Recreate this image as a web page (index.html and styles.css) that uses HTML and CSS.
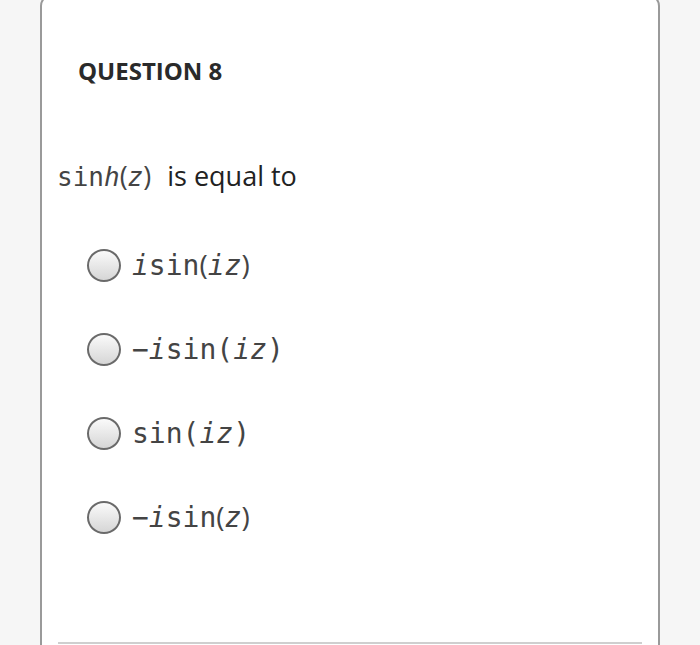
FILE: index.html
```html
<!DOCTYPE html>
<html>
<head>
<meta charset="utf-8">
<link rel="stylesheet" href="styles.css">
</head>
<body>
<div class="card">
  <h2 class="title">QUESTION 8</h2>
  <p class="question"><span class="m">sin<i>h</i></span><span class="p">(</span><span class="m"><i>z</i></span><span class="p">)</span><span class="rest">is equal to</span></p>
  <ul class="options">
    <li class="opt"><span class="radio"></span><span class="label"><span class="m"><i>i</i>sin</span><span class="p">(</span><span class="m"><i>iz</i></span><span class="p">)</span></span></li>
    <li class="opt"><span class="radio"></span><span class="label"><span class="m">−<i>i</i>sin(<i>iz</i>)</span></span></li>
    <li class="opt"><span class="radio"></span><span class="label"><span class="m">sin(<i>iz</i>)</span></span></li>
    <li class="opt"><span class="radio"></span><span class="label"><span class="m">−<i>i</i>sin</span><span class="p">(</span><span class="m"><i>z</i></span><span class="p">)</span></span></li>
  </ul>
  <div class="rule"></div>
</div>
</body>
</html>
```
FILE: styles.css
```css
html, body {
  margin: 0;
  padding: 0;
  background: #f6f6f6;
  overflow: hidden;
}
body {
  font-family: "Open Sans", sans-serif;
  color: #222;
}
.card {
  margin: -6px 0 0 40px;
  width: 620px;
  height: 700px;
  background: #fff;
  border: 2px solid #9a9a9a;
  border-radius: 12px;
  padding: 59px 0 0 0;
  box-sizing: border-box;
}
.title {
  margin: 0 0 0 36px;
  font-size: 24px;
  line-height: 32px;
  font-weight: 700;
  color: #2a2a2a;
}
.question {
  margin: 71px 0 0 15px;
  font-size: 27px;
  line-height: 36px;
  color: #222;
}
.question .p {
  font-size: 27px;
}
.rest {
  margin-left: 16px;
}
.m {
  font-family: "DejaVu Sans Mono", monospace;
  font-size: 26px;
  color: #444;
}
.p {
  color: #444;
  font-size: 28px;
}
.options {
  list-style: none;
  margin: 52px 0 0 0;
  padding: 0;
  display: flex;
  flex-direction: column;
  gap: 48px;
}
.opt {
  display: flex;
  align-items: center;
  gap: 11px;
  height: 36px;
  padding-left: 45px;
}
.radio {
  width: 34px;
  height: 33px;
  box-sizing: border-box;
  border: 2px solid #6a6a6a;
  border-radius: 50%;
  background: linear-gradient(#fafafa, #d6d6d6);
  flex: none;
}
.label {
  font-size: 27px;
  line-height: 36px;
}
.label .m {
  font-size: 28px;
}
.rule {
  margin: 107px 0 0 16px;
  width: 584px;
  height: 2px;
  background: #cfcfcf;
}
```
